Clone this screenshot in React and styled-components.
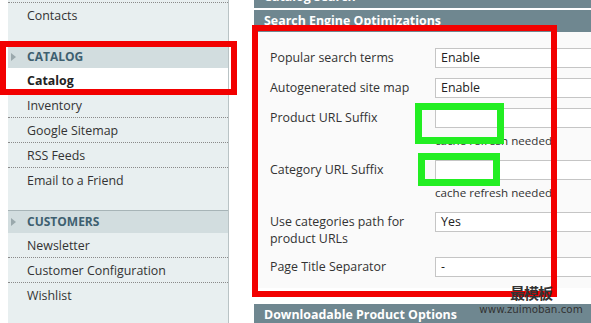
import React from 'react';
import styled, { createGlobalStyle } from 'styled-components';

const GlobalStyle = createGlobalStyle`
    html, body{
        margin:0;
        padding:0;
        background:#ffffff;
        font-family:"Open Sans", "Noto Sans", "Noto Sans CJK SC", sans-serif;
        color:#333333;
    }
`;

const navSections = [
    { title: null, items: ['Contacts'] },
    { title: 'CATALOG', items: ['Catalog', 'Inventory', 'Google Sitemap', 'RSS Feeds', 'Email to a Friend'], active: 'Catalog' },
    { title: 'CUSTOMERS', items: ['Newsletter', 'Customer Configuration', 'Wishlist'] },
];

const fields = [
    { label: 'Popular search terms', value: 'Enable' },
    { label: 'Autogenerated site map', value: 'Enable' },
    { label: 'Product URL Suffix', value: '', note: 'cache refresh needed' },
    { label: 'Category URL Suffix', value: '', note: 'cache refresh needed' },
    { label: 'Use categories path for product URLs', value: 'Yes' },
    { label: 'Page Title Separator', value: '-' },
];

function App() {
    return (
        <Page>
            <GlobalStyle />
            <Sidebar>
                {navSections.map((section, i) => (
                    <Section key={i}>
                        {section.title && (
                            <SectionTitle>
                                <Arrow />
                                {section.title}
                            </SectionTitle>
                        )}
                        {section.items.map((item, j) => (
                            <NavItem key={item} $first={j === 0 && !!section.title} $active={section.active === item}>
                                {item}
                            </NavItem>
                        ))}
                    </Section>
                ))}
            </Sidebar>
            <Main>
                <Bar $cut>Catalog Search</Bar>
                <Bar>Search Engine Optimizations</Bar>
                <Fieldset>
                    {fields.map(f => (
                        <Row key={f.label}>
                            <Label>{f.label}</Label>
                            <Value>
                                <Input>{f.value}</Input>
                                {f.note && <Note>{f.note}</Note>}
                            </Value>
                        </Row>
                    ))}
                </Fieldset>
                <Bar>Downloadable Product Options</Bar>
            </Main>

            <Mark $color="#f20000" $w={6} style={{ left: 0, top: 41, width: 237, height: 54 }} />
            <Mark $color="#f20000" $w={6} style={{ left: 252, top: 25, width: 305, height: 272 }} />
            <Mark $color="#22ee22" $w={7} style={{ left: 415, top: 103, width: 89, height: 41 }} />
            <Mark $color="#22ee22" $w={7} style={{ left: 418, top: 153, width: 82, height: 33 }} />
            <Watermark>
                <span>最模板</span>
                <small>www.zuimoban.com</small>
            </Watermark>
        </Page>
    );
}

const Page = styled.div`
    position:relative;
    width:591px;
    height:323px;
    overflow:hidden;
    display:flex;
    align-items:flex-start;
`;

const Sidebar = styled.nav`
    margin-left:8px;
    padding-top:2px;
    width:220px;
    height:330px;
    flex-shrink:0;
    background:#e8eff0;
    border-right:1px solid #b9c3c5;
`;

const Section = styled.div`
    padding-bottom:18px;
`;

const SectionTitle = styled.div`
    position:relative;
    height:22px;
    line-height:22px;
    border-top:1px solid #a7b4b7;
    background:#d2dddf;
    padding-left:19px;
    font-size:12px;
    font-weight:700;
    color:#3e6070;
`;

const Arrow = styled.i`
    position:absolute;
    left:3px;
    top:7px;
    width:0;
    height:0;
    border-top:4px solid transparent;
    border-bottom:4px solid transparent;
    border-left:5px solid #9aa8ac;
`;

const NavItem = styled.div`
    height:23px;
    padding-top:1px;
    line-height:24px;
    padding-left:19px;
    font-size:12.4px;
    overflow:hidden;
    border-top:${p => p.$first ? 'none' : '1px dotted #8a8a8a'};
    background:${p => p.$active ? '#ffffff' : 'transparent'};
    font-weight:${p => p.$active ? 700 : 400};
    color:${p => p.$active ? '#222222' : '#333333'};
`;

const Main = styled.main`
    margin-left:25px;
    flex:1;
    min-width:0;
    margin-top:-14px;
`;

const Bar = styled.div`
    height:22px;
    line-height:22px;
    background:#6f8790;
    color:#ffffff;
    font-size:12.4px;
    font-weight:700;
    padding-left:10px;
    margin-bottom:${p => p.$cut ? '2px' : '0'};
    white-space:nowrap;
`;

const Fieldset = styled.div`
    background:#fafafa;
    padding:11px 0 6px 16px;
    margin-bottom:16px;
`;

const Row = styled.div`
    display:grid;
    grid-template-columns:165px 1fr;
    padding:5px 0;
`;

const Label = styled.div`
    font-size:12.4px;
    line-height:17px;
    padding-top:1px;
    padding-right:10px;
    color:#333333;
`;

const Value = styled.div`
    min-width:0;
`;

const Input = styled.div`
    box-sizing:border-box;
    width:220px;
    height:20px;
    line-height:18px;
    border:1px solid #c5c5c5;
    background:#ffffff;
    padding-left:5px;
    font-size:12.4px;
    color:#222222;
`;

const Note = styled.div`
    margin:5px 0 1px;
    font-size:11.6px;
    line-height:16px;
    color:#333333;
`;

const Mark = styled.div`
    position:absolute;
    box-sizing:border-box;
    border:${p => p.$w}px solid ${p => p.$color};
    pointer-events:none;
`;

const Watermark = styled.div`
    position:absolute;
    left:479px;
    top:284px;
    width:104px;
    display:flex;
    flex-direction:column;
    align-items:center;
    color:#333333;
    span{
        font-family:"Noto Sans CJK SC", serif;
        font-size:15px;
        font-weight:700;
        line-height:18px;
        letter-spacing:-1px;
    }
    small{
        font-family:"DejaVu Sans", sans-serif;
        font-size:10.3px;
        line-height:14px;
    }
`;

export default App;
